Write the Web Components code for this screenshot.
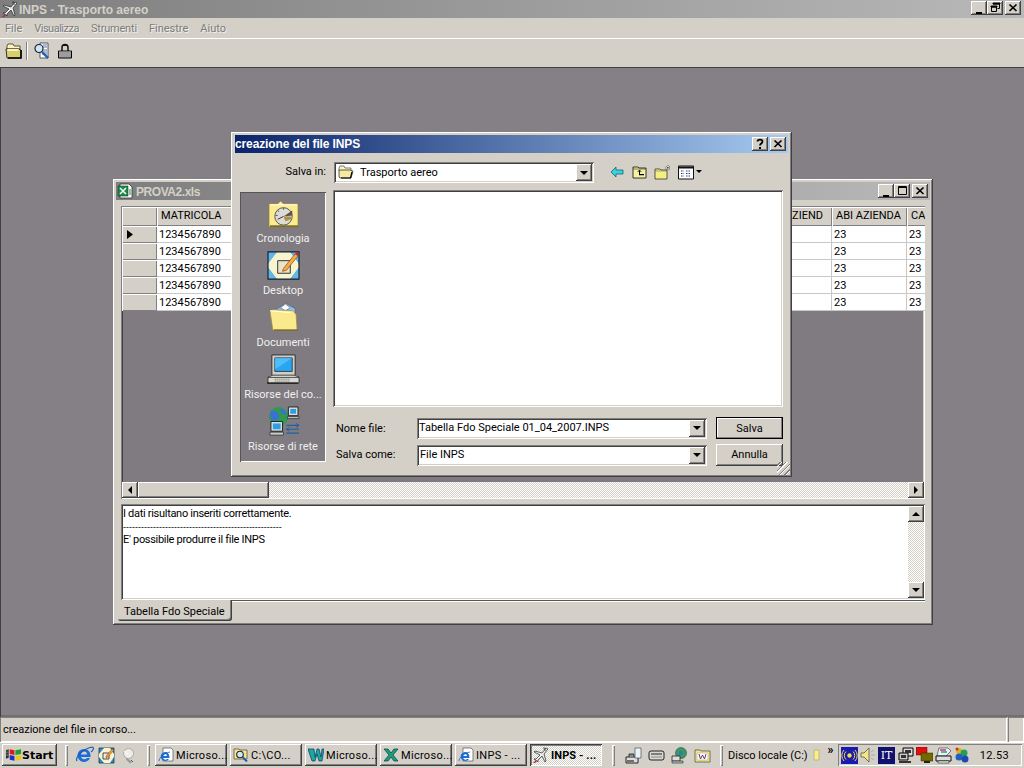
<!DOCTYPE html>
<html lang="it"><head><meta charset="utf-8"><title>INPS - Trasporto aereo</title>
<style>
html,body{margin:0;padding:0;width:1024px;height:768px;overflow:hidden;background:#d4d0c8;font:11px Roboto,"Liberation Sans",Arial,sans-serif;color:#000}
</style></head><body>
<app-shell>
  <win-caption slot="caption" tone="inactive" style="height:18px;padding:0 3px 0 2px">
    <x-icon slot="icon" name="plane" size="16" style="margin-right:1px"></x-icon>INPS - Trasporto aereo
    <cap-btns slot="btns" style="margin-top:-2px"><cap-btn kind="min"></cap-btn><cap-btn kind="restore"></cap-btn><cap-btn kind="close" style="margin-left:2px"></cap-btn></cap-btns>
  </win-caption>
  <menu-bar slot="menu"><span style="margin-left:5px">File</span><span style="margin-left:12px;letter-spacing:-.5px">Visualizza</span><span style="margin-left:12px;letter-spacing:-.2px">Strumenti</span><span style="margin-left:12px">Finestre</span><span style="margin-left:12px">Aiuto</span></menu-bar>
  <tool-bar slot="tools">
    <x-icon name="folderBig" size="18" style="margin-left:5px"></x-icon>
    <i style="width:2px;height:18px;margin-left:3px;background:linear-gradient(90deg,#808080 50%,#fff 50%)"></i>
    <x-icon name="search" size="18" style="margin-left:5px"></x-icon>
    <x-icon name="lock" size="16" style="margin-left:6px"></x-icon>
  </tool-bar>

  <mdi-area slot="mdi">
    <xls-window style="left:113px;top:112px"></xls-window>
    <save-dialog style="left:231px;top:65px"></save-dialog>
  </mdi-area>

  <status-bar slot="status">creazione del file in corso...</status-bar>

  <task-bar slot="task">
    <start-btn>Start</start-btn>
    <tb-sep style="margin-left:8px"></tb-sep>
    <x-icon name="ie" size="19" style="margin-left:7px"></x-icon>
    <x-icon name="desk" size="17" style="margin-left:4px"></x-icon>
    <x-icon name="bulb" size="17" style="margin-left:6px"></x-icon>
    <tb-sep style="margin-left:9px"></tb-sep>
    <task-btn icon="iedoc" style="margin-left:5px">Microso...</task-btn>
    <task-btn icon="findfolder">C:\CO...</task-btn>
    <task-btn icon="word">Microso...</task-btn>
    <task-btn icon="excel">Microso...</task-btn>
    <task-btn icon="iedoc">INPS - ...</task-btn>
    <task-btn icon="plane" active>INPS - ...</task-btn>
    <tb-sep style="margin-left:7px"></tb-sep>
    <x-icon name="scanner" size="17" style="margin-left:10px"></x-icon>
    <x-icon name="drive" size="17" style="margin-left:6px"></x-icon>
    <x-icon name="netdoc" size="17" style="margin-left:6px"></x-icon>
    <x-icon name="yfolder" size="17" style="margin-left:6px"></x-icon>
    <tb-sep style="margin-left:9px"></tb-sep>
    <span style="margin-left:5px;white-space:nowrap;width:81px">Disco locale (C:)</span>
    <x-icon name="ybar" size="12" style="margin-left:2px"></x-icon>
    <b style="margin-left:1px;align-self:flex-start;margin-top:-1px;font-size:12px;width:13px;text-align:center">»</b>
    <sys-tray>
      <x-icon name="radio" size="17"></x-icon>
      <x-icon name="speaker" size="16" style="margin-left:2px"></x-icon>
      <span class="it">IT</span>
      <x-icon name="pcs" size="16" style="margin-left:3px"></x-icon>
      <x-icon name="redmon" size="17" style="margin-left:2px"></x-icon>
      <x-icon name="printer" size="17" style="margin-left:2px"></x-icon>
      <x-icon name="balls" size="16" style="margin-left:2px"></x-icon>
      <span class="clock">12.53</span>
    </sys-tray>
  </task-bar>
</app-shell>

<script>
const FACE='#d4d0c8';
const RAISED='box-shadow:inset -1px -1px #404040,inset 1px 1px #fff,inset -2px -2px #808080,inset 2px 2px #d4d0c8;';
const SUNK='box-shadow:inset 1px 1px #808080,inset -1px -1px #fff,inset 2px 2px #404040,inset -2px -2px #d4d0c8;';
const DITHER='background:repeating-conic-gradient(#fff 0 25%,#d4d0c8 0 50%) 0 0/2px 2px;';
const FONT='font:11px Roboto,"Liberation Sans",Arial,sans-serif;';

function def(name,css,html,init){
  customElements.define(name,class extends HTMLElement{
    connectedCallback(){
      if(this.shadowRoot)return;
      const r=this.attachShadow({mode:'open'});
      const h=typeof html==='function'?html(this):html;
      r.innerHTML='<style>'+css+'</style>'+h;
      if(init)init(this,r);
    }
  });
}

const FOLD='#f5e9a0';
const ICONS={
plane:`<svg viewBox="0 0 16 16"><path d="M13 1 L9 6 L2 4 L1 5 L7 8 L3 12 L1 12 L4 14 L5 15 L5 13 L9 9 L12 15 L13 14 L11 7 L15 2Z" fill="#eee" stroke="#222" stroke-width=".7"/><path d="M0 16l3-3 1 1-2 2z" fill="#c02020"/><path d="M10 1h2v3" fill="none" stroke="#222" stroke-width=".7"/></svg>`,
folderBig:`<svg viewBox="0 0 18 18"><path d="M2 4l1-2h5l1 2h6v3H2z" fill="#fdf6b8" stroke="#333" stroke-width=".8"/><path d="M1 7h12l3 1v8H2z" fill="#d8d070" stroke="#222" stroke-width=".9"/><path d="M2 7h12l-1 2H3z" fill="#fbf5b0"/><path d="M16 8v8H3" fill="none" stroke="#000" stroke-width="1.6"/></svg>`,
search:`<svg viewBox="0 0 18 18"><path d="M7 1h8v15H7z" fill="#fff" stroke="#334" stroke-width=".8"/><path d="M9 8h5M9 10h5M9 12h5M10 3h4M10 5h4" stroke="#4a6a9a" stroke-width=".9"/><circle cx="6" cy="6.5" r="4" fill="#cfe6f5" stroke="#223" stroke-width="1.2"/><path d="M9 10l6 6" stroke="#1e5fb0" stroke-width="2.4"/></svg>`,
lock:`<svg viewBox="0 0 16 16"><path d="M5 8V4.500a3 3 0 016 0V8" fill="none" stroke="#111" stroke-width="1.500"/><path d="M5 2.500h6" stroke="#111"/><path d="M1.500 8h13v7h-13z" fill="#eee" stroke="#000"/><path d="M2 10h12M2 12h12M2 14h12" stroke="#222" stroke-width=".8"/></svg>`,
folder:`<svg viewBox="0 0 16 16"><path d="M1 4l1-2h4l1 2h6v3H1z" fill="#fdf6c0" stroke="#444" stroke-width=".7"/><path d="M1 13V6h11l3 1-2 7H2z" fill="${FOLD}" stroke="#333" stroke-width=".8"/><path d="M14 8l-1.500 6H3" fill="none" stroke="#000" stroke-width="1.2"/></svg>`,
back:`<svg viewBox="0 0 14 12"><path d="M1 6l5-5v3h7v4H6v3z" fill="#3cd0d8" stroke="#0a6a78" stroke-width=".8"/></svg>`,
up:`<svg viewBox="0 0 16 16"><path d="M1 3h5l1 1h7v10H1z" fill="#f5f3a0" stroke="#222" stroke-width=".9"/><path d="M1 5h13" stroke="#222" stroke-width=".6"/><path d="M5 7.500L7.500 6 10 7.500H8V10h4v1.200H7V7.500z" fill="#000"/></svg>`,
newf:`<svg viewBox="0 0 18 16"><path d="M1 5h5l1 1h6v9H1z" fill="#f5ee80" stroke="#333" stroke-width=".8"/><path d="M1 7h12" stroke="#555" stroke-width=".5"/><path d="M14 1v5M11 4h6M12 2l4 4M16 2l-4 4" stroke="#222" stroke-width=".6" stroke-dasharray="1 1"/></svg>`,
views:`<svg viewBox="0 0 16 16"><path d="M.5 2h15v13H.5z" fill="#fff" stroke="#111"/><path d="M1 2.500h14v2H1z" fill="#111"/><path d="M3 7h3M8 7h5M3 9.500h3M8 9.500h5M3 12h3M8 12h5" stroke="#223a80" stroke-width="1.100" stroke-dasharray="1.500 1"/></svg>`,
histo:`<svg viewBox="0 0 34 32"><path d="M2 6h9l3-3 3 3h15v24H2z" fill="#fdeb90" stroke="#8a7a30" stroke-width=".7"/><path d="M3 7h28" stroke="#fff" stroke-width="1"/><path d="M3 29h29" stroke="#6a5a20" stroke-width="1.500"/><circle cx="17" cy="19" r="9" fill="#dcdcd4" stroke="#555"/><path d="M17 19l9-6v5z" fill="#555"/><path d="M17 19l-6 3" stroke="#333" stroke-width="1"/><path d="M17 10v2M9 18h2M11 13l1.500 1" stroke="#555"/><path d="M19 24l6-2v-3l-8 0z" fill="#b09040"/></svg>`,
desktop:`<svg viewBox="0 0 34 32"><path d="M1 2h32v28H1z" fill="#2e8ac8"/><path d="M1 14L10 2h14l9 12v4L24 30H10L1 18z" fill="#f8f4d0"/><path d="M1 2h9L1 14zM33 2h-9l9 12zM1 30h9L1 18zM33 30h-9l9-12z" fill="#63b6e6"/><path d="M1 2h32v28H1z" fill="none" stroke="#123" stroke-width="1.200"/><path d="M11 11h13v13H11z" fill="#e8e4c8" stroke="#333"/><path d="M17 19L29 4l3 2-12 15-4 1z" fill="#f0b040" stroke="#a03010" stroke-width=".7"/><path d="M29 4l3 2 1-2-2-2z" fill="#d02020"/></svg>`,
docs:`<svg viewBox="0 0 34 32"><path d="M3 8l8-1 8-6 10 6v4H3z" fill="#8fc6ee" stroke="#557"  stroke-width=".6"/><path d="M14 6l5-4 5 4-5 3z" fill="#fff" stroke="#457" stroke-width=".6"/><path d="M3 9l3-1 21 1 3 4 1 16H6z" fill="#fbe98e" stroke="#9a8a40" stroke-width=".7"/><path d="M7 29h25" stroke="#776a28" stroke-width="1.400"/><path d="M3 9l21 2" stroke="#fff"/></svg>`,
pc:`<svg viewBox="0 0 34 32"><path d="M5 1h24v21H5z" fill="#cfcfc8" stroke="#222" stroke-width=".9"/><path d="M8 4h18v14H8z" fill="#2aa6f0" stroke="#223" stroke-width=".8"/><path d="M8 4h18l-18 12z" fill="#5cc8ff" opacity=".7"/><path d="M1 24h32v6H1z" fill="#d8d8d0" stroke="#222" stroke-width=".8"/><path d="M6 22l-5 2h32l-5-2z" fill="#efefe8" stroke="#222" stroke-width=".6"/><path d="M8 26h16M8 28h16" stroke="#666" stroke-dasharray="1 1"/><path d="M32 30h-32" stroke="#000"/></svg>`,
net:`<svg viewBox="0 0 34 32"><circle cx="12" cy="11" r="10" fill="#2f9a50"/><path d="M5 5c3 0 6 1 7 4s-1 6-4 6S3 11 3 9zM14 3c3 0 5 2 6 4s-3 2-4 1-3-3-2-5z" fill="#3a70d8"/><path d="M22 1h10v9H22z" fill="#ddd" stroke="#222"/><path d="M24 3h6v5h-6z" fill="#28a0e8"/><path d="M21 11h12v2H21z" fill="#ccc" stroke="#222" stroke-width=".7"/><path d="M4 16h12v10H4z" fill="#ddd" stroke="#222"/><path d="M6 18h8v6H6z" fill="#28a0e8"/><path d="M3 27h14v3H3z" fill="#ccc" stroke="#222" stroke-width=".7"/><path d="M20 20h13M20 24h13M20 28h13" stroke="#2060a0" stroke-width="1.200"/><path d="M30 18l3 2-3 2M23 22l-3 2 3 2" fill="none" stroke="#2060a0"/></svg>`,
xls:`<svg viewBox="0 0 16 16"><path d="M3 1h9l3 3v11H3z" fill="#fff" stroke="#333" stroke-width=".8"/><path d="M1 3h10v10H1z" fill="#1c8a4a" stroke="#0a4a20" stroke-width=".6"/><path d="M3 5l6 6M9 5l-6 6" stroke="#fff" stroke-width="1.500"/><path d="M12 7h2M12 9h2M12 11h2" stroke="#1c8a4a"/></svg>`,
ie:`<svg viewBox="0 0 19 19"><path d="M9 3a6.500 6.500 0 106 9h-3a3.500 3.500 0 01-6-1h9.500C16 6 13 3 9 3zM6 8.500a3 3 0 016 0z" fill="#1a6ed8" fill-rule="evenodd"/><path d="M2 15C0 12 7 3 17 1c2 0 2 3-1 5" fill="none" stroke="#1a5ab8" stroke-width="1.200"/></svg>`,
desk:`<svg viewBox="0 0 17 17"><path d="M1 1h15v15H1z" fill="#2e8ac8" stroke="#123" stroke-width=".7"/><path d="M1 7l5-6h6l4 6v3l-4 6H6l-5-6z" fill="#f8f4d0"/><path d="M5 6h6v6H5z" fill="#eee" stroke="#222" stroke-width=".8"/><path d="M8 9l6-7 2 1-6 7-2 1z" fill="#e8a030" stroke="#822" stroke-width=".4"/></svg>`,
bulb:`<svg viewBox="0 0 17 17"><circle cx="7.500" cy="6.500" r="5" fill="#eeeee8" stroke="#aaa"/><path d="M6 11l5 4-2 1.500-4-4z" fill="#999"/><path d="M3 4l4 3" stroke="#fff"/><path d="M10 13l2 2" stroke="#555"/></svg>`,
iedoc:`<svg viewBox="0 0 16 16"><path d="M5 1h8l2 2v11H5z" fill="#fff" stroke="#555" stroke-width=".7"/><path d="M7 5a4.500 4.500 0 104 7H9a2.500 2.500 0 01-4-1h6.500C11.500 7.500 10 5 7 5zM5 9a2 2 0 014 0z" fill="#1a6ed8" fill-rule="evenodd"/><path d="M1 14c0-3 5-8 11-9" fill="none" stroke="#1a5ab8" stroke-width=".8"/></svg>`,
findfolder:`<svg viewBox="0 0 16 16"><path d="M1 2h5l1 1h7v9H1z" fill="#f5e880" stroke="#444" stroke-width=".7"/><circle cx="7" cy="7.500" r="3.300" fill="#cfe6f5" stroke="#223" stroke-width="1.100"/><path d="M9.500 10l4.500 4.500" stroke="#1e5fb0" stroke-width="2"/></svg>`,
word:`<svg viewBox="0 0 16 16"><path d="M0 2h6l1 8 2-8h2l2 8 1-8h2l-2 12h-3l-2-7-2 7H4z" fill="#1aa8a0" stroke="#063a60" stroke-width=".7"/></svg>`,
excel:`<svg viewBox="0 0 16 16"><path d="M1 2h4l3 4 3-4h4l-5 6 5 6h-4l-3-4-3 4H1l5-6z" fill="#1aa080" stroke="#073a30" stroke-width=".7"/></svg>`,
scanner:`<svg viewBox="0 0 17 17"><path d="M1 10h12v6H1z" fill="#ddd" stroke="#222"/><path d="M4 10V7h5v3" fill="#888" stroke="#222" stroke-width=".8"/><path d="M10 1h6v10h-6z" fill="#e8f4fa" stroke="#456" stroke-width=".7"/><path d="M2 14h7" stroke="#000"/></svg>`,
drive:`<svg viewBox="0 0 17 17"><path d="M1 6a2 2 0 012-2h11a2 2 0 012 2v5a2 2 0 01-2 2H3a2 2 0 01-2-2z" fill="#d8d8d0" stroke="#222"/><path d="M3 7h11" stroke="#222"/><path d="M3 10h11" stroke="#888"/></svg>`,
netdoc:`<svg viewBox="0 0 17 17"><circle cx="10" cy="6" r="5.500" fill="#3a9a60" stroke="#234" stroke-width=".5"/><path d="M1 9h8v5H1z" fill="#ddd" stroke="#222" stroke-width=".8"/><path d="M1 14h11v2H1z" fill="#bbb" stroke="#222" stroke-width=".6"/><path d="M8 4l4 0 0 4-4 0z" fill="#2a70d0" opacity=".7"/></svg>`,
yfolder:`<svg viewBox="0 0 17 17"><path d="M1 3h5l1 1h9v11H1z" fill="#f5e880" stroke="#444" stroke-width=".7"/><path d="M3 6h11v7H3z" fill="#fff" stroke="#999" stroke-width=".5"/><path d="M5 7l1.500 5L8.500 8l2 4L12 7" fill="none" stroke="#703060" stroke-width="1"/></svg>`,
ybar:`<svg viewBox="0 0 12 12"><path d="M3 1h5v10H3z" fill="#f6ee90" stroke="#b8b060" stroke-width=".8"/></svg>`,
radio:`<svg viewBox="0 0 17 17"><path d="M0 0h17v17H0z" fill="#1a1ab0"/><circle cx="8.500" cy="8.500" r="2.200" fill="#f0e040"/><path d="M5 4.500a5.500 5.500 0 000 8M12 4.500a5.500 5.500 0 010 8M3 3a8 8 0 000 11M14 3a8 8 0 010 11" fill="none" stroke="#e8e040" stroke-width="1"/></svg>`,
speaker:`<svg viewBox="0 0 16 16"><path d="M1 6h3l5-5v14l-5-5H1z" fill="#f0e888" stroke="#444" stroke-width=".7"/><path d="M11 5l3-2M11 8h4M11 11l3 2" stroke="#aaa"/></svg>`,
pcs:`<svg viewBox="0 0 16 16"><path d="M5 1h10v8H5z" fill="#ddd" stroke="#000"/><path d="M1 6h9v7H1z" fill="#ccc" stroke="#000"/><path d="M3 8h5v3H3z" fill="#333"/><path d="M7 3h6v3H7z" fill="#333"/><path d="M1 15h12" stroke="#000" stroke-width="1.500"/></svg>`,
redmon:`<svg viewBox="0 0 17 17"><path d="M0 0h11v8H0z" fill="#e01010" stroke="#600" stroke-width=".5"/><path d="M5 6h12v8H5z" fill="#706a00" stroke="#302a00" stroke-width=".5"/><path d="M8 14h6v2H8z" fill="#222"/></svg>`,
printer:`<svg viewBox="0 0 17 17"><path d="M4 1h9l3 3-5 5H2z" fill="#e8f4f4" stroke="#333" stroke-width=".6"/><path d="M5 3l6 0" stroke="#d02080" stroke-width="1.400"/><path d="M6 5h6" stroke="#10a060" stroke-width="1.400"/><path d="M1 9h15v5H1z" fill="#ddd" stroke="#111"/><path d="M3 14h11v2H3z" fill="#fff" stroke="#111" stroke-width=".6"/></svg>`,
balls:`<svg viewBox="0 0 16 16"><circle cx="5" cy="4" r="3" fill="#d8b020"/><circle cx="10" cy="6" r="3.500" fill="#20a050"/><circle cx="5" cy="10" r="3.500" fill="#2060c0"/><circle cx="11" cy="12" r="3.500" fill="#1a4ab0"/><circle cx="3" cy="2" r="1.500" fill="#d03020"/></svg>`,
windows:`<svg viewBox="0 0 18 16"><path d="M1 3l3-1v9l-3 1z" fill="#333"/><path d="M5 2l5 1v5L5 7z" fill="#e01818"/><path d="M11 3l6-1v5l-6 1z" fill="#18a030"/><path d="M5 8l5 1v5l-5-1z" fill="#1830d0"/><path d="M11 9l6-1v5l-6 1z" fill="#e8c818"/><path d="M1 5h3M1 8h3" stroke="#888"/></svg>`
};

def('x-icon',':host{display:inline-flex;flex:none}svg{display:block;width:100%;height:100%}',
  el=>ICONS[el.getAttribute('name')]||'',
  el=>{const s=el.getAttribute('size')||16,w=el.getAttribute('w')||s;el.style.width=w+'px';el.style.height=s+'px';});

def('app-shell',`:host{display:flex;flex-direction:column;width:1024px;height:768px;background:${FACE};${FONT}color:#000;overflow:hidden}`,
  `<slot name="caption"></slot><slot name="menu"></slot><slot name="tools"></slot><slot name="mdi"></slot><slot name="status"></slot><slot name="task"></slot>`);

def('win-caption',`:host{display:flex;align-items:center;flex:none;box-sizing:border-box;font:bold 12px "Liberation Sans",Arial,sans-serif;color:${FACE};white-space:nowrap;overflow:hidden}
  :host([tone=inactive]){background:linear-gradient(90deg,#7e7e7e,#b8b8b8)}
  :host([tone=active]){background:linear-gradient(90deg,#0a246a,#a6caf0);color:#fff}
  .i{display:flex}.t{padding-top:2px}.b{margin-left:auto;display:flex}`,
  `<span class="i"><slot name="icon"></slot></span><span class="t"><slot></slot></span><span class="b"><slot name="btns"></slot></span>`);

def('cap-btns',':host{display:flex;align-items:center}','<slot></slot>');

const GLYPH={
 min:'<path d="M3 10h6v2H3z"/>',
 max:'<path d="M2.500 1.500h8v8h-8z" fill="none" stroke="#000"/><path d="M2 2h9v1H2z"/>',
 restore:'<path d="M4.500 1.500h6v5h-2M2 4h6v1H2zM4 1h7v1H4z" fill="none" stroke="#000"/><path d="M2.500 4.500h5v5h-5z" fill="none" stroke="#000"/><path d="M2 4h6v1.500H2zM4 1h7v1.500H4z"/>',
 close:'<path d="M2.500 2.500l7 6.500M9.500 2.500l-7 6.500" stroke="#000" stroke-width="1.700"/>',
 help:'<path d="M3.500 3.500C3.500 1 8.500 1 8.500 3.500c0 2-2.500 2-2.500 4" fill="none" stroke="#000" stroke-width="1.800"/><path d="M5 9h2v2H5z"/>'
};
def('cap-btn',`:host{display:block;width:16px;height:14px;background:${FACE};${RAISED}position:relative;flex:none}
  svg{position:absolute;left:2px;top:1px;width:12px;height:12px}`,
  el=>`<svg viewBox="0 0 12 12">${GLYPH[el.getAttribute('kind')]}</svg>`);

def('menu-bar',`:host{display:flex;align-items:center;height:19px;margin-top:1px;flex:none;box-sizing:border-box;padding-bottom:1px;color:#7c7c7c;box-shadow:0 1px #fff;text-shadow:1px 1px 0 rgba(255,255,255,.7)}`,'<slot></slot>');
def('tool-bar',`:host{display:flex;align-items:center;height:28px;margin-top:1px;flex:none;padding-bottom:4px;box-sizing:border-box}`,'<slot></slot>');

def('mdi-area',`:host{display:block;position:relative;flex:none;height:650px;background:#858085;box-shadow:inset 0 1px #404040,inset 1px 1px #404040,inset 0 -2px #707070,inset 0 -1px #fff}`,'<slot></slot>');

def('status-bar',`:host{display:flex;height:25px;flex:none;box-sizing:border-box;padding:0 0 1px 3px;align-items:center;color:#000;position:relative}
  .s{position:absolute;left:0;top:0;bottom:0;width:1007px;box-shadow:inset 1px 1px #808080,inset -1px -1px #fff}
  .g{position:absolute;left:1008px;right:0;top:0;bottom:0;box-shadow:inset 1px 1px #808080,inset -1px -1px #fff}`,
  `<i class="s"></i><i class="g"></i><slot></slot>`);

def('task-bar',`:host{display:flex;align-items:center;height:26px;flex:none;box-sizing:border-box;padding:2px;box-shadow:inset 0 1px #fff}`,'<slot></slot>');

def('start-btn',`:host{display:flex;align-items:center;width:55px;height:22px;flex:none;box-sizing:border-box;background:${FACE};${RAISED}font:bold 11px "DejaVu Sans","Liberation Sans",sans-serif;padding-left:3px;white-space:nowrap}
  svg{width:17px;height:16px;flex:none}`,
  ()=>ICONS.windows+'<slot></slot>');

def('tb-sep',`:host{display:block;width:3px;height:21px;flex:none;box-shadow:inset 1px 1px #fff,inset -1px -1px #808080}`,'');

def('task-btn',`:host{display:flex;align-items:center;width:72px;height:22px;margin-right:3px;flex:none;box-sizing:border-box;background:${FACE};${RAISED}padding-left:3px;white-space:nowrap;overflow:hidden;letter-spacing:.3px}
  :host([active]){${DITHER}font-weight:bold;letter-spacing:.1px;box-shadow:inset 1px 1px #404040,inset -1px -1px #fff,inset 2px 2px #808080}
  svg{width:16px;height:16px;flex:none;margin-right:2px}`,
  el=>ICONS[el.getAttribute('icon')]+'<slot></slot>');

def('sys-tray',`:host{display:flex;align-items:center;height:22px;width:184px;margin-left:1px;flex:none;box-sizing:border-box;padding-left:3px;box-shadow:inset 1px 1px #808080,inset -1px -1px #fff}
  ::slotted(.it){background:#10106e;color:#fff;width:17px;height:17px;margin-left:2px;display:flex;align-items:center;justify-content:center;font:11px "DejaVu Serif","Liberation Serif",serif;flex:none}
  ::slotted(.clock){margin-left:auto;margin-right:13px;letter-spacing:.3px}`,'<slot></slot>');

def('mini-arrow',`:host{display:flex;align-items:center;justify-content:center;width:16px;height:16px;flex:none;box-sizing:border-box;background:${FACE};${RAISED}}
  svg{width:8px;height:8px}`,
  el=>{const d={left:'M6 0v8L2 4z',right:'M2 0v8l4-4z',up:'M0 6h8L4 2z',down:'M0 2h8L4 6z'}[el.getAttribute('dir')];return `<svg viewBox="0 0 8 8"><path d="${d}"/></svg>`;});

def('win-combo',`:host{display:flex;align-items:center;box-sizing:border-box;height:21px;background:#fff;padding:2px;${SUNK}white-space:nowrap;flex:none}
  .t{flex:1;display:flex;align-items:center;overflow:hidden;padding-bottom:1px}`,
  el=>`<span class="t"><slot name="icon"></slot><slot></slot></span><mini-arrow dir="down" style="height:17px"></mini-arrow>`);

def('push-btn',`:host{display:flex;align-items:center;justify-content:center;box-sizing:border-box;width:67px;height:22px;background:${FACE};${RAISED}flex:none}
  :host([default]){box-shadow:inset 0 0 0 1px #000,inset -2px -2px #808080,inset 2px 2px #fff}`,'<slot></slot>');

def('place-item',`:host{display:flex;flex-direction:column;align-items:center;height:52px;flex:none;color:#f0f0f0;white-space:nowrap}
  .l{height:14px;line-height:14px;margin-top:3px}`,
  el=>`<x-icon name="${el.getAttribute('icon')}" size="31" w="33"></x-icon><span class="l"><slot></slot></span>`);

def('save-dialog',`:host{position:absolute;display:block;width:561px;height:345px;box-sizing:border-box;padding:3px 4px;background:${FACE};${RAISED}${FONT}}
  .row1{display:flex;align-items:center;height:21px;padding-top:9px}
  .lab{width:91px;text-align:right;padding-right:8px;padding-bottom:2px}
  .tb{display:flex;align-items:center;margin-left:16px;padding-bottom:2px}
  .row2{display:flex;margin-top:7px;padding-left:5px}
  .side{width:86px;height:270px;margin-top:2px;box-sizing:border-box;padding-top:6px;background:#7f7b80;box-shadow:inset 1px 1px #555,inset -1px -1px #fff;display:flex;flex-direction:column}
  .main{width:450px;margin-left:7px}
  .list{height:217px;background:#fff;${SUNK}}
  .form{display:grid;grid-template-columns:84px 290px 67px;row-gap:5px;margin-top:10px;align-items:center}
  .form .l{padding-left:3px}
  .form push-btn{margin-left:9px}
  .grip{position:absolute;right:2px;bottom:2px;width:13px;height:13px;background:repeating-linear-gradient(135deg,transparent 0 2px,#808080 2px 3px,#fff 3px 4px)}`,
  `<win-caption tone="active" style="height:18px;padding:0 2px 2px 0"><span style="letter-spacing:-.13px">creazione del file INPS</span>
     <cap-btns slot="btns" style="margin-top:2px"><cap-btn kind="help" style="margin-right:2px"></cap-btn><cap-btn kind="close"></cap-btn></cap-btns></win-caption>
   <div class="row1"><span class="lab">Salva in:</span>
     <win-combo style="width:260px"><x-icon slot="icon" name="folder" size="16" style="margin:0 6px 0 2px"></x-icon>Trasporto aereo</win-combo>
     <div class="tb"><x-icon name="back" size="12" w="14"></x-icon><x-icon name="up" size="16" style="margin-left:8px"></x-icon><x-icon name="newf" size="16" w="18" style="margin-left:6px"></x-icon><x-icon name="views" size="16" style="margin-left:6px"></x-icon><svg width="6" height="4" style="margin-left:2px"><path d="M0 0h6L3 3z"/></svg></div>
   </div>
   <div class="row2">
     <div class="side">
       <place-item icon="histo">Cronologia</place-item>
       <place-item icon="desktop">Desktop</place-item>
       <place-item icon="docs">Documenti</place-item>
       <place-item icon="pc">Risorse del co...</place-item>
       <place-item icon="net">Risorse di rete</place-item>
     </div>
     <div class="main">
       <div class="list"></div>
       <div class="form">
         <span class="l">Nome file:</span><win-combo>Tabella Fdo Speciale 01_04_2007.INPS</win-combo><push-btn default>Salva</push-btn>
         <span class="l" style="padding-bottom:2px">Salva come:</span><win-combo style="padding-left:3px">File INPS</win-combo><push-btn style="padding-bottom:2px">Annulla</push-btn>
       </div>
     </div>
   </div>
   <i class="grip"></i>`);

const COLS=['MATRICOLA','ZIEND','ABI AZIENDA','CA'];
def('data-grid',`:host{display:flex;flex-direction:column;height:293px;background:#7f7b80;${SUNK}padding:1px;box-sizing:border-box;overflow:hidden}
  .t{display:grid;grid-template-columns:35px 98px 577px 75px 20px;grid-template-rows:19px;grid-auto-rows:17px;flex:none}
  .t>*{box-sizing:border-box;white-space:nowrap;overflow:hidden;display:flex;align-items:center;padding-left:3px}
  .h{background:${FACE};box-shadow:inset 1px 1px #fff,inset -1px -1px #808080;padding-left:4px !important;padding-bottom:2px}
  .h.first{padding:0}
  .hr{background:${FACE};box-shadow:inset 1px 1px #fff,inset -1px -1px #808080}
  .c{background:#fff;border-right:1px solid #c8c8c8;border-bottom:1px solid #c8c8c8;padding-left:2px !important}
  .sp{flex:1}
  .hs{display:flex;height:16px;flex:none}
  .th{width:131px;height:16px;background:${FACE};${RAISED}flex:none}
  .tr{flex:1;${DITHER}}`,
  ()=>{let s='<div class="t"><div class="h first"></div>';
    for(const n of COLS) s+=`<div class="h" ${n==='ZIEND'?'style="justify-content:flex-end;padding-right:9px"':''}>${n}</div>`;
    for(let i=0;i<5;i++){
      s+=`<div class="hr">${i==0?'<svg width="6" height="9" style="margin-left:2px"><path d="M0 0l6 4.500L0 9z"/></svg>':''}</div><div class="c">1234567890</div><div class="c"></div><div class="c">23</div><div class="c">23</div>`;
    }
    return s+`</div><div class="sp"></div><div class="hs"><mini-arrow dir="left"></mini-arrow><div class="th"></div><div class="tr"></div><mini-arrow dir="right"></mini-arrow></div>`;
  });

def('msg-box',`:host{display:flex;height:96px;box-sizing:border-box;background:#fff;${SUNK}padding:2px 1px 2px 2px;flex:none}
  .x{flex:1;line-height:13px;padding-top:1px;white-space:nowrap;letter-spacing:-.3px}
  .d{font:9px "Liberation Sans",Arial,sans-serif;letter-spacing:0}
  .v{width:16px;display:flex;flex-direction:column;flex:none}
  .v div{flex:1;${DITHER}}`,
  `<div class="x">I dati risultano inseriti correttamente.<br><span class="d">-----------------------------------------------------</span><br>E' possibile produrre il file INPS</div>
   <div class="v"><mini-arrow dir="up"></mini-arrow><div></div><mini-arrow dir="down"></mini-arrow></div>`);

def('xls-window',`:host{position:absolute;display:flex;flex-direction:column;width:820px;height:446px;box-sizing:border-box;padding:3px;background:${FACE};${RAISED}${FONT}}
  .body{padding:6px 5px 0 5px;flex:1;display:flex;flex-direction:column}
  msg-box{margin-top:5px}
  .tabs{display:flex;height:22px;flex:none;margin:0 0 0 -3px}
  .tab{width:114px;height:21px;box-sizing:border-box;padding:1px 0 0 6px;display:flex;align-items:center;background:${FACE};box-shadow:inset -1px -1px #404040,inset -2px -2px #808080;border-radius:0 0 3px 3px}
  .rest{flex:1;border-top:1px solid #555;box-shadow:inset 0 1px #fff}`,
  `<win-caption tone="inactive" style="height:18px;padding:0 2px 0 1px"><x-icon slot="icon" name="xls" size="16" style="margin-right:3px"></x-icon><span style="letter-spacing:-.45px">PROVA2.xls</span>
     <cap-btns slot="btns"><cap-btn kind="min"></cap-btn><cap-btn kind="max"></cap-btn><cap-btn kind="close" style="margin-left:2px"></cap-btn></cap-btns></win-caption>
   <div class="body"><data-grid></data-grid><msg-box></msg-box>
     <div class="tabs"><div class="tab">Tabella Fdo Speciale</div><div class="rest"></div></div></div>`);
</script>
</body></html>
